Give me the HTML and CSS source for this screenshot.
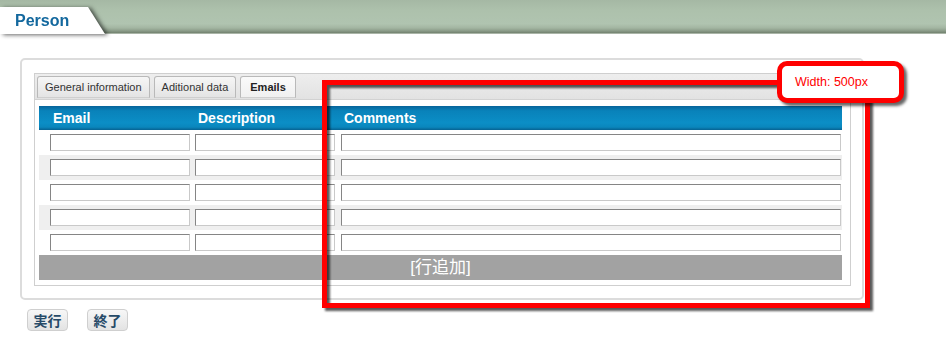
FILE: index.html
```html
<!DOCTYPE html>
<html>
<head>
<meta charset="utf-8">
<link rel="stylesheet" href="styles.css">
</head>
<body>
<header class="topbar">
  <div class="ptab-wrap"><div class="ptab">Person</div></div>
</header>
<main class="content">
  <section class="panel">
    <div class="tabs">
      <div class="tabstrip">
        <span class="tab">General information</span>
        <span class="tab">Aditional data</span>
        <span class="tab active">Emails</span>
      </div>
      <div class="tabbody">
        <div class="row head"><div>Email</div><div>Description</div><div>Comments</div></div>
        <div class="row"><input class="field"><input class="field"><input class="field"></div>
        <div class="row alt"><input class="field"><input class="field"><input class="field"></div>
        <div class="row"><input class="field"><input class="field"><input class="field"></div>
        <div class="row alt"><input class="field"><input class="field"><input class="field"></div>
        <div class="row"><input class="field"><input class="field"><input class="field"></div>
        <div class="addrow">[行追加]</div>
      </div>
    </div>
  </section>
  <div class="buttons">
    <button class="btn">実行</button>
    <button class="btn">終了</button>
  </div>
</main>
<div class="highlight"></div>
<div class="callout">Width: 500px</div>
</body>
</html>
```
FILE: styles.css
```css
html, body {
  margin: 0;
  padding: 0;
  background: #fff;
  font-family: "Liberation Sans", Arial, "Noto Sans CJK JP", sans-serif;
}
.topbar {
  height: 34px;
  display: flex;
  align-items: flex-end;
  background: linear-gradient(to bottom, #a5b8a4 0, #adc1ac 30%, #b0c4b0 70%, #a3b6a2 82%, #8d9e8b 90%, #72826f 97%, #dfe6dd 100%);
}
.ptab-wrap {
  filter: drop-shadow(3px 1px 2px rgba(0,0,0,.6));
}
.ptab {
  width: 105px;
  height: 27px;
  background: #fff;
  clip-path: polygon(0 0, 88px 0, 105px 100%, 0 100%);
  box-sizing: border-box;
  padding: 6px 0 0 15px;
  font-weight: bold;
  font-size: 16px;
  color: #13689e;
  line-height: 16px;
}
.content {
  padding: 24px 0 0 20px;
}
.panel {
  width: 844px;
  height: 242px;
  box-sizing: border-box;
  border: 2px solid #dcdcdc;
  border-radius: 5px;
  padding: 13px 11px 12px 12px;
}
.tabs {
  border: 1px solid #cfcfcf;
  height: 213px;
  box-sizing: border-box;
}
.tabstrip {
  height: 26px;
  box-sizing: border-box;
  display: flex;
  gap: 4px;
  padding: 2px 0 0 2px;
  background: linear-gradient(#eeeeee, #e2e2e2);
  border-bottom: 1px solid #d2d2d2;
}
.tab {
  height: 22px;
  box-sizing: border-box;
  padding: 0 7px;
  border: 1px solid #b9b9b9;
  border-bottom-color: #cfcfcf;
  border-radius: 3px 3px 0 0;
  background: linear-gradient(#f6f6f6, #e4e4e4);
  font-size: 11px;
  line-height: 20px;
  color: #333;
}
.tab.active {
  font-weight: bold;
  background: linear-gradient(#fafafa, #f0f0f0);
  color: #222;
  padding: 0 9px;
}
.tabbody {
  padding: 6px 8px 5px 4px;
}
.row {
  display: grid;
  grid-template-columns: 140px 140px 500px;
  column-gap: 5px;
  padding-left: 11px;
  height: 25px;
  box-sizing: border-box;
  align-items: start;
  padding-top: 4px;
}
.row .field:nth-child(3) {
  margin-left: 1px;
}
.row.alt {
  background: #efefef;
}
.row.head {
  height: 24px;
  padding-top: 0;
  align-items: center;
  background: linear-gradient(#06649a 0, #0982ba 20%, #0b8ec6 70%, #0a86bc 88%, #066292 100%);
  color: #fff;
  font-weight: bold;
  font-size: 14px;
}
.row.head div {
  padding-left: 3px;
}
.row.head div:nth-child(3) {
  padding-left: 4px;
}
.field {
  display: block;
  width: 100%;
  height: 17px;
  box-sizing: border-box;
  margin: 0;
  padding: 0;
  border: 1px solid;
  border-color: #858585 #c9c9c9 #c9c9c9 #858585;
  background: #fff;
}
.addrow {
  height: 25px;
  background: #a2a2a2;
  color: #fff;
  text-align: center;
  font-size: 17px;
  line-height: 25px;
  font-family: "Liberation Sans", "Noto Sans CJK JP", sans-serif;
}
.buttons {
  display: flex;
  gap: 19px;
  padding: 9px 0 0 7px;
}
.btn {
  width: 41px;
  height: 22px;
  padding: 0;
  border: 1px solid #cfcfcf;
  border-radius: 4px;
  background: linear-gradient(#f7f7f7, #e3e3e3);
  color: #264a68;
  font-weight: bold;
  font-size: 14px;
  font-family: "Noto Sans CJK JP", sans-serif;
  line-height: 20px;
}
.highlight {
  position: absolute;
  left: 322px;
  top: 80px;
  width: 548px;
  height: 228px;
  box-sizing: border-box;
  border: 5px solid #ff0000;
  filter: drop-shadow(3px 3px 1px rgba(0,0,0,.65));
}
.callout {
  position: absolute;
  left: 777px;
  top: 61px;
  width: 127px;
  height: 42px;
  box-sizing: border-box;
  border: 5px solid #ff0000;
  border-radius: 10px;
  background: #fff;
  box-shadow: 3px 3px 3px rgba(0,0,0,.6);
  color: #ff0000;
  font-size: 12.5px;
  line-height: 32px;
  padding-left: 13px;
}
```
